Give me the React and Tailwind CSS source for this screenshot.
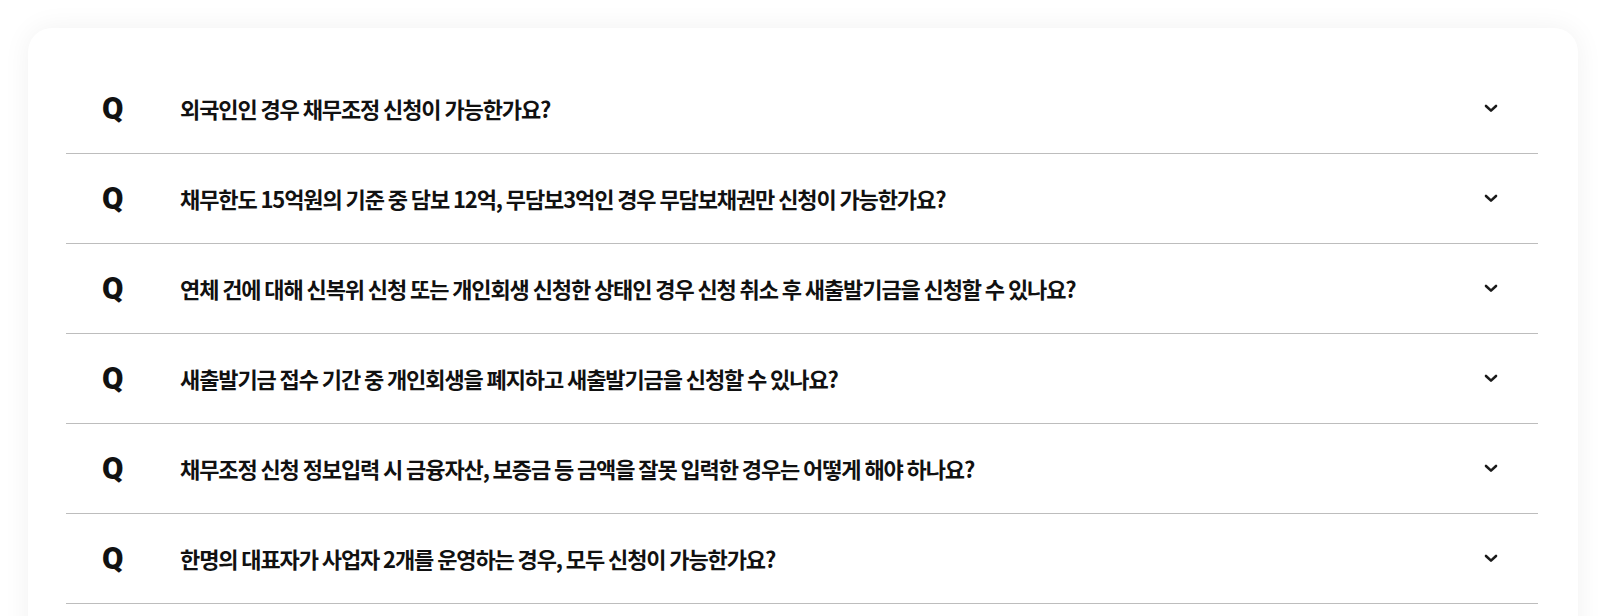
import React from "react";

const QUESTIONS = [
  "외국인인 경우 채무조정 신청이 가능한가요?",
  "채무한도 15억원의 기준 중 담보 12억, 무담보3억인 경우 무담보채권만 신청이 가능한가요?",
  "연체 건에 대해 신복위 신청 또는 개인회생 신청한 상태인 경우 신청 취소 후 새출발기금을 신청할 수 있나요?",
  "새출발기금 접수 기간 중 개인회생을 폐지하고 새출발기금을 신청할 수 있나요?",
  "채무조정 신청 정보입력 시 금융자산, 보증금 등 금액을 잘못 입력한 경우는 어떻게 해야 하나요?",
  "한명의 대표자가 사업자 2개를 운영하는 경우, 모두 신청이 가능한가요?",
];

// small bold chevron used on each row
const Chevron = () => (
  <svg width="14" height="9" viewBox="0 0 14 9" fill="none">
    <path
      d="M2 2 L7 6.6 L12 2"
      stroke="#1a1a1a"
      strokeWidth="2.6"
      strokeLinecap="round"
      strokeLinejoin="round"
    />
  </svg>
);

const App = () => {
  return (
    <div className="min-h-screen bg-white px-7 pt-7 font-['Noto_Sans_CJK_KR','Noto_Sans',sans-serif]">
      <div className="rounded-3xl bg-white pb-16 pl-[38px] pr-[40px] pt-9 shadow-[0_0_28px_rgba(0,0,0,0.06)]">
        {QUESTIONS.map((q) => (
          <div
            key={q}
            className="flex h-[90px] items-center border-b border-[#bdbdbd] pl-9"
          >
            <span className="w-[78px] shrink-0 font-['Roboto','Noto_Sans',sans-serif] text-[31px] font-black leading-none text-[#111]">
              Q
            </span>
            <span className="flex-1 text-[22px] font-bold tracking-[-1.1px] text-[#111]">
              {q}
            </span>
            <span className="mr-10 flex items-center">
              <Chevron />
            </span>
          </div>
        ))}
      </div>
    </div>
  );
};

export default App;
